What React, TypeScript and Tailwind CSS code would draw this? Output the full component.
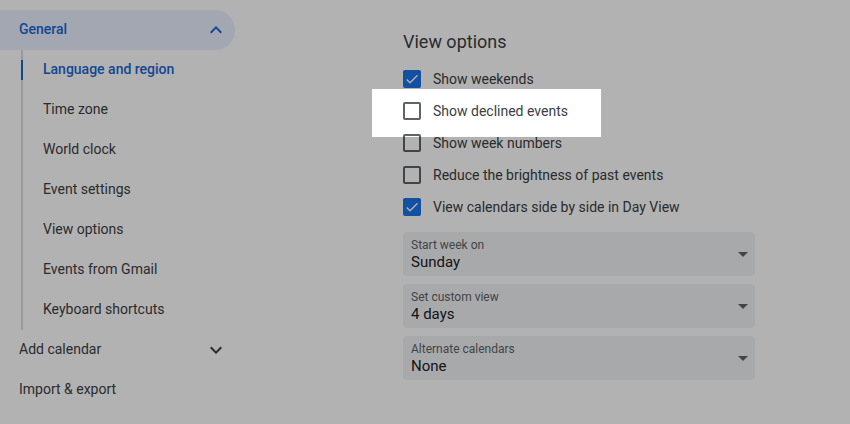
import React from 'react';

const subItems = [
  'Language and region',
  'Time zone',
  'World clock',
  'Event settings',
  'View options',
  'Events from Gmail',
  'Keyboard shortcuts',
];

const checks = [
  { label: 'Show weekends', on: true },
  { label: 'Show declined events', on: false },
  { label: 'Show week numbers', on: false },
  { label: 'Reduce the brightness of past events', on: false },
  { label: 'View calendars side by side in Day View', on: true },
];

const selects = [
  { label: 'Start week on', value: 'Sunday' },
  { label: 'Set custom view', value: '4 days' },
  { label: 'Alternate calendars', value: 'None' },
];

const Chevron = ({ up, color }: { up?: boolean; color: string }) => (
  <svg width="24" height="24" viewBox="0 0 24 24" fill={color}>
    {up ? (
      <path d="M12 8l-6 6 1.41 1.41L12 10.83l4.59 4.58L18 14z" />
    ) : (
      <path d="M16.59 8.59L12 13.17 7.41 8.59 6 10l6 6 6-6z" />
    )}
  </svg>
);

const Checkbox = ({ on }: { on: boolean }) =>
  on ? (
    <div className="w-[18px] h-[18px] rounded-[2px] bg-[#1a73e8] flex items-center justify-center">
      <svg width="16" height="16" viewBox="0 0 24 24" fill="#fff">
        <path d="M9 16.17L4.83 12l-1.42 1.41L9 19 21 7l-1.41-1.41z" />
      </svg>
    </div>
  ) : (
    <div className="w-[18px] h-[18px] rounded-[2px] border-2 border-[#5f6368] bg-white" />
  );

export default function App() {
  return (
    <div
      className="relative w-[850px] h-[424px] overflow-hidden bg-white flex text-[#3c4043]"
      style={{ fontFamily: 'Roboto, "Noto Sans", sans-serif' }}
    >
      {/* sidebar */}
      <div className="w-[235px] pt-[10px] text-[14px]">
        <div className="h-10 rounded-r-full bg-[#e8f0fe] flex items-center justify-between pl-[19px] pr-[7px] text-[#1967d2] font-medium">
          <span className="pb-[2px]">General</span>
          <Chevron up color="#1967d2" />
        </div>
        <div className="ml-[21px] my-[10px] border-l-2 border-[#dadce0]">
          {subItems.map((s, i) => (
            <div
              key={s}
              className={`h-10 flex items-center ${i === 0 ? '-mt-[10px]' : ''} ${
                i === subItems.length - 1 ? '-mb-[10px]' : ''
              }`}
            >
              <div className={`h-5 w-[2px] -ml-[2px] ${i === 0 ? 'bg-[#1967d2]' : 'bg-transparent'}`} />
              <span className={`pl-5 pb-[2px] ${i === 0 ? 'text-[#1967d2] font-medium' : ''}`}>{s}</span>
            </div>
          ))}
        </div>
        <div className="h-10 flex items-center justify-between pl-[19px] pr-[7px]">
          <span className="pb-[2px]">Add calendar</span>
          <Chevron color="#3c4043" />
        </div>
        <div className="h-10 flex items-center pl-[19px]">
          <span className="pb-[2px]">Import &amp; export</span>
        </div>
      </div>

      {/* content */}
      <div className="ml-[168px] w-[352px] pt-[30px]">
        <h2 className="text-[18px] leading-6 text-[#3c4043]">View options</h2>
        <div className="mt-[9px]">
          {checks.map((c) => (
            <div key={c.label} className="h-8 flex items-center gap-[12px] text-[14px]">
              <Checkbox on={c.on} />
              <span>{c.label}</span>
            </div>
          ))}
        </div>
        <div className="mt-[9px] flex flex-col gap-2">
          {selects.map((s) => (
            <div key={s.label} className="h-[44px] rounded-[4px] bg-[#f1f3f4] flex items-center justify-between pl-2">
              <div className="flex flex-col pb-[1px]">
                <span className="text-[12px] leading-4 text-[#5f6368]">{s.label}</span>
                <span className="text-[15px] leading-[18px] text-[#202124]">{s.value}</span>
              </div>
              <svg width="24" height="24" viewBox="0 0 24 24" fill="#5f6368">
                <path d="M7 10l5 5 5-5z" />
              </svg>
            </div>
          ))}
        </div>
      </div>

      {/* spotlight overlay */}
      <div className="absolute left-[372px] top-[89px] w-[229px] h-[48px] shadow-[0_0_0_9999px_rgba(0,0,0,0.3)] pointer-events-none" />
    </div>
  );
}
